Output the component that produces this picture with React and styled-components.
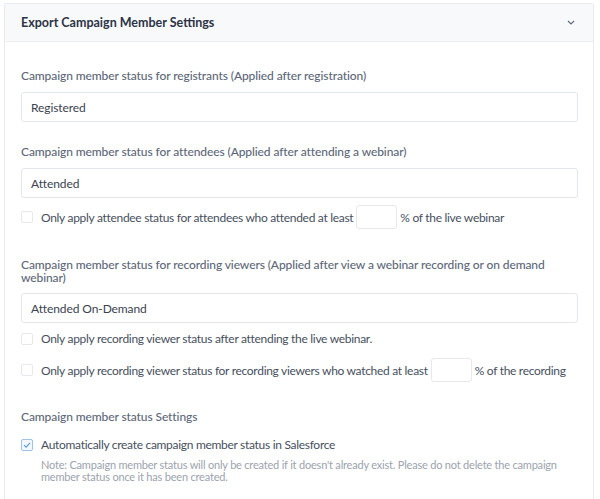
import React from "react";
import styled, { createGlobalStyle } from "styled-components";

const GlobalStyle = createGlobalStyle`
  body {
    margin: 0;
    background: #fff;
    font-family: 'Lato', 'Liberation Sans', sans-serif;
  }
`;

const Card = styled.div`
  margin: 3px 6px 0 4px;
  border: 1px solid #e8eaee;
  border-bottom: none;
  border-radius: 3px 3px 0 0;
  min-height: 496px;
  box-sizing: border-box;
`;

const Header = styled.div`
  height: 37px;
  display: flex;
  align-items: center;
  justify-content: space-between;
  padding: 0 18px 0 16px;
  background: #f8f9fb;
  border-bottom: 1px solid #eceef2;
`;

const Title = styled.h2`
  margin: 0;
  font-size: 12.5px;
  font-weight: 700;
  color: #2c3445;
`;

const Body = styled.div`
  padding: 27px 15px 20px 16px;
`;

const Label = styled.div`
  font-size: 12px;
  letter-spacing: -0.1px;
  line-height: ${(p) => p.$lh || 14}px;
  font-weight: 500;
  color: #5d6878;
  margin-top: ${(p) => p.$top || 0}px;
  margin-bottom: ${(p) => p.$bottom || 9}px;
`;

const TextInput = styled.div`
  height: 30px;
  box-sizing: border-box;
  border: 1px solid #e3e6eb;
  border-radius: 3px;
  padding: 0 9px;
  display: flex;
  align-items: center;
  font-size: 12px;
  letter-spacing: -0.1px;
  color: #3b4250;
`;

const Row = styled.div`
  display: flex;
  align-items: center;
  min-height: ${(p) => p.$h || 14}px;
  margin-top: ${(p) => p.$top || 0}px;
  font-size: 12px;
  letter-spacing: -0.3px;
  color: #474f5d;
  white-space: nowrap;
`;

const Box = styled.span`
  width: 12px;
  height: 12px;
  box-sizing: border-box;
  border: 1px solid ${(p) => (p.$checked ? "#9cc3ec" : "#e6e8ec")};
  background: ${(p) => (p.$checked ? "#f3f8fe" : "#fff")};
  border-radius: 2px;
  margin-right: 8px;
  flex: none;
  display: flex;
  align-items: center;
  justify-content: center;
`;

const SmallInput = styled.span`
  width: 41px;
  height: 24px;
  box-sizing: border-box;
  border: 1px solid #e6e8ec;
  border-radius: 3px;
  margin: 0 3px 0 3px;
  flex: none;
`;

const Note = styled.div`
  margin: 7px 0 0 20px;
  font-size: 11px;
  letter-spacing: -0.2px;
  line-height: 12px;
  color: #9ba3ae;
`;

const Check = () => (
  <svg width="8" height="8" viewBox="0 0 8 8">
    <path d="M1 4.2 L3.1 6.2 L7 1.8" fill="none" stroke="#5b9be0" strokeWidth="1.1" />
  </svg>
);

const Chevron = () => (
  <svg width="8" height="5" viewBox="0 0 8 5">
    <path d="M1 1 L4 4 L7 1" fill="none" stroke="#5f6a7d" strokeWidth="1.2" />
  </svg>
);

const CheckRow = ({ checked, top, h, children }) => (
  <Row $top={top} $h={h}>
    <Box $checked={checked}>{checked && <Check />}</Box>
    {children}
  </Row>
);

export default function App() {
  return (
    <>
      <GlobalStyle />
      <Card>
        <Header>
          <Title>Export Campaign Member Settings</Title>
          <Chevron />
        </Header>
        <Body>
          <Label>Campaign member status for registrants (Applied after registration)</Label>
          <TextInput>Registered</TextInput>

          <Label $top={23}>Campaign member status for attendees (Applied after attending a webinar)</Label>
          <TextInput>Attended</TextInput>
          <CheckRow top={7} h={24}>
            Only apply attendee status for attendees who attended at least
            <SmallInput />
            % of the live webinar
          </CheckRow>

          <Label $top={29} $lh={13}>
            Campaign member status for recording viewers (Applied after view a webinar recording or on demand webinar)
          </Label>
          <TextInput>Attended On-Demand</TextInput>
          <CheckRow top={8}>Only apply recording viewer status after attending the live webinar.</CheckRow>
          <CheckRow top={12} h={24}>
            Only apply recording viewer status for recording viewers who watched at least
            <SmallInput />
            % of the recording
          </CheckRow>

          <Label $top={28} $bottom={13}>Campaign member status Settings</Label>
          <CheckRow checked>Automatically create campaign member status in Salesforce</CheckRow>
          <Note>
            Note: Campaign member status will only be created if it doesn't already exist. Please do not delete the
            campaign member status once it has been created.
          </Note>
        </Body>
      </Card>
    </>
  );
}
